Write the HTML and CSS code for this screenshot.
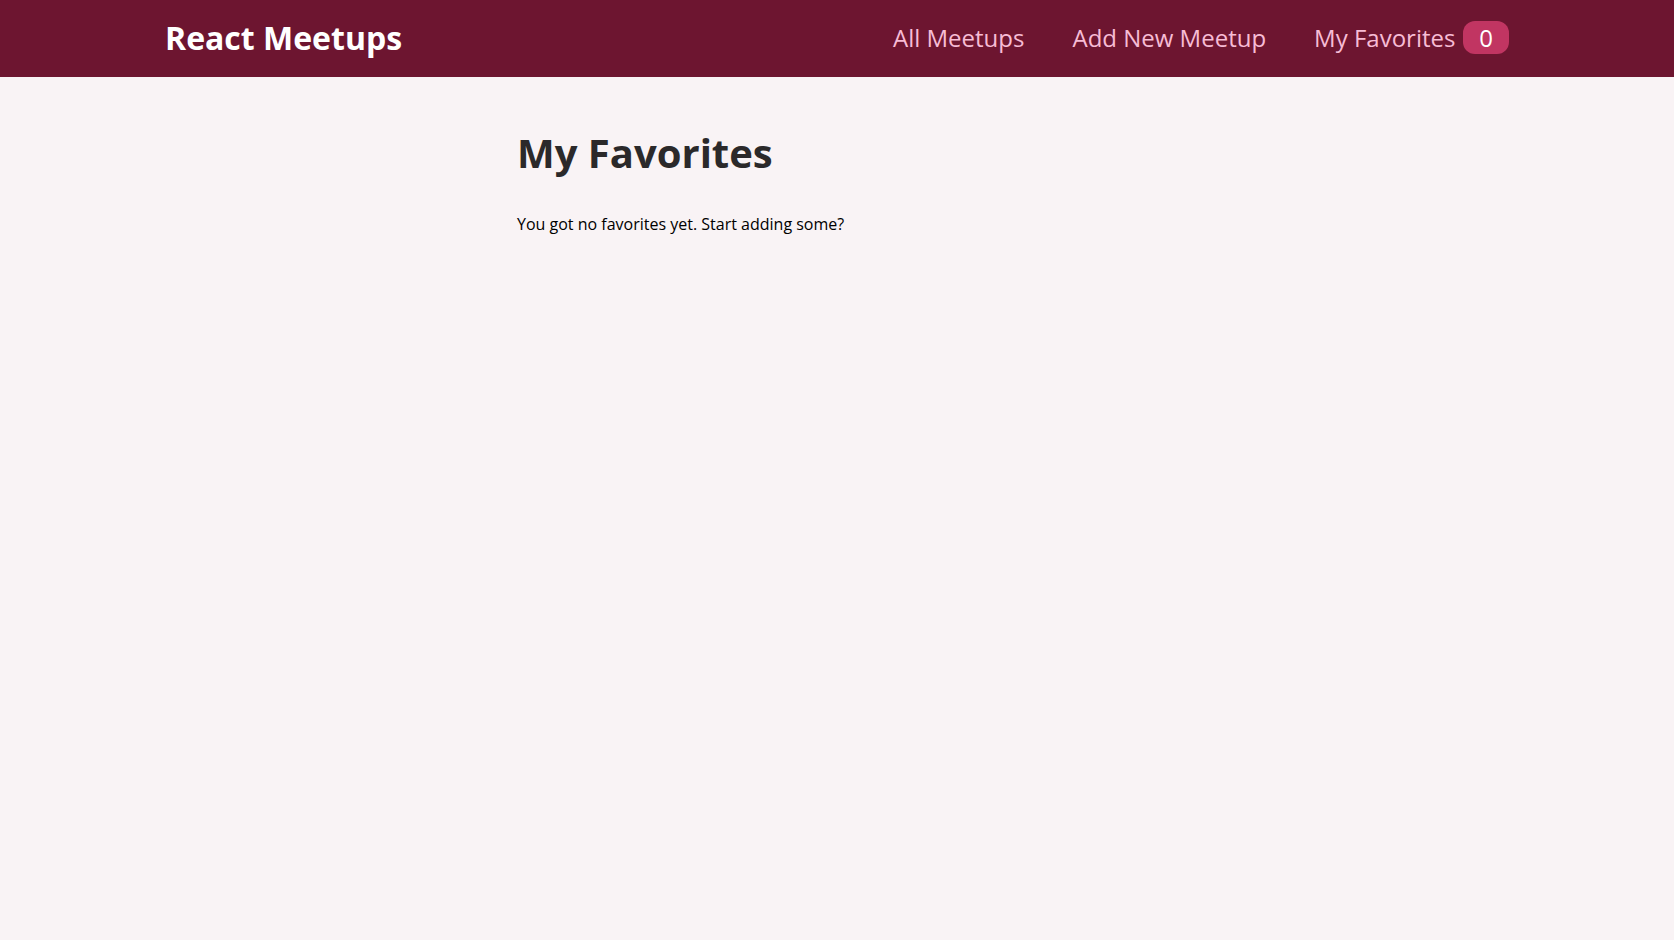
FILE: index.html
```html
<!DOCTYPE html>
<html lang="en">
<head>
<meta charset="utf-8">
<title>React Meetups</title>
<link rel="stylesheet" href="styles.css">
</head>
<body>
<header class="header">
  <div class="logo">React Meetups</div>
  <nav>
    <ul class="nav-list">
      <li><a href="#">All Meetups</a></li>
      <li><a href="#">Add New Meetup</a></li>
      <li><a href="#">My Favorites <span class="badge">0</span></a></li>
    </ul>
  </nav>
</header>
<main class="main">
  <h1 class="title">My Favorites</h1>
  <p class="empty">You got no favorites yet. Start adding some?</p>
</main>
</body>
</html>
```
FILE: styles.css
```css
* {
  box-sizing: border-box;
}

body {
  margin: 0;
  font-family: "Open Sans", "Noto Sans", sans-serif;
  background-color: #f9f3f5;
  color: #000;
}

.header {
  width: 100%;
  height: 77px;
  display: flex;
  align-items: center;
  justify-content: space-between;
  background-color: #6d1530;
  padding: 0 165px 2px;
}

.logo {
  font-size: 2rem;
  color: #ffffff;
  font-weight: bold;
}

.nav-list {
  list-style: none;
  margin: 0;
  padding: 0;
  display: flex;
  align-items: baseline;
}

.nav-list li {
  margin-left: 3rem;
}

.nav-list a {
  text-decoration: none;
  font-size: 1.5rem;
  color: #f7bcd5;
}

.badge {
  background-color: #c13562;
  color: #ffffff;
  border-radius: 12px;
  padding: 0 1rem;
  margin-left: 0.1rem;
}

.main {
  margin: 3rem auto;
  width: 90%;
  max-width: 40rem;
}

.title {
  font-size: 2.5rem;
  font-weight: bold;
  color: #2b292a;
  margin: 0 0 33px;
}

.empty {
  font-size: 1rem;
  margin: 0;
}
```
